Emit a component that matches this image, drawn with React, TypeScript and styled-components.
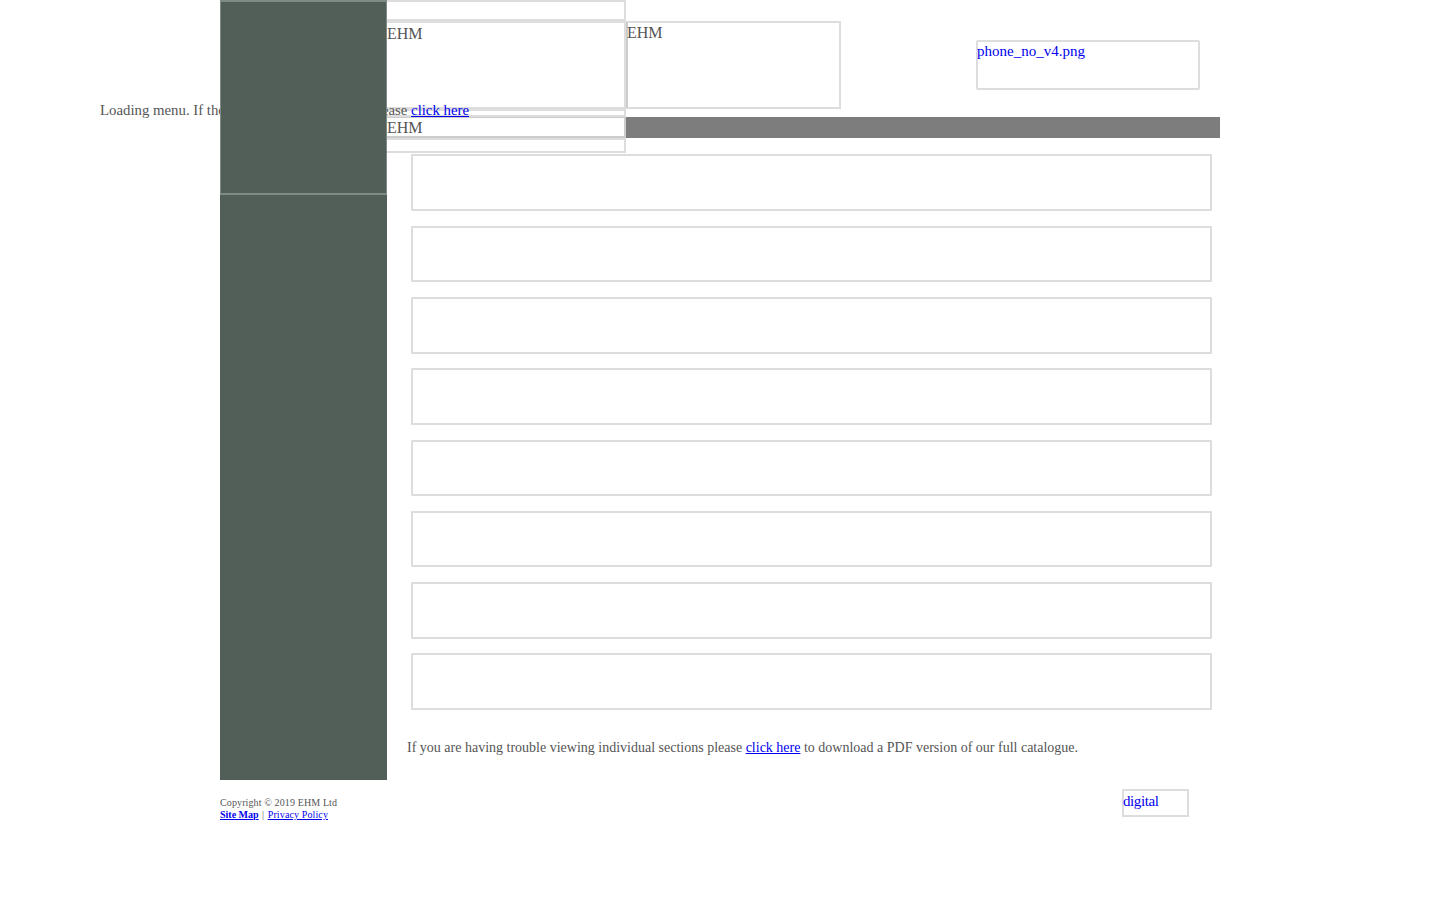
import styled, { createGlobalStyle } from 'styled-components';

const GlobalStyle = createGlobalStyle`
  html, body {
    margin: 0;
    padding: 0;
    background: #fff;
    color: #555;
    font-family: "Liberation Serif", "Times New Roman", serif;
    font-size: 16px;
  }
  a {
    color: #0000ee;
  }
`;

const rows = [0, 1, 2, 3, 4, 5, 6, 7];

const App = () => {
  return (
    <Page>
      <GlobalStyle />
      <LoadingNote>
        Loading menu. If the <Covered>menu does not appear, </Covered>please{' '}
        <a href="#">click here</a>
      </LoadingNote>
      <Sidebar>
        <SideLogo />
      </Sidebar>
      <Main>
        <Header>
          <LogoStack>
            <Slot $height={21} />
            <Slot $height={88}>EHM</Slot>
            <Slot $height={8} />
            <NavSlot>EHM</NavSlot>
            <Slot $height={15} />
          </LogoStack>
          <HeaderRight>
            <TopRow>
              <Banner>EHM</Banner>
              <PhoneBox>phone_no_v4.png</PhoneBox>
            </TopRow>
            <GreyBar />
          </HeaderRight>
        </Header>
        <Sections>
          {rows.map((row) => (
            <Section key={row} />
          ))}
        </Sections>
        <Catalogue>
          If you are having trouble viewing individual sections please <a href="#">click here</a> to
          download a PDF version of our full catalogue.
        </Catalogue>
      </Main>
      <Footer>
        <Legal>
          Copyright © 2019 EHM Ltd
          <br />
          <a href="#">
            <SiteMap>Site Map</SiteMap>
          </a>
          <Divider>|</Divider>
          <a href="#">Privacy Policy</a>
        </Legal>
        <DigitalBox>digital</DigitalBox>
      </Footer>
    </Page>
  );
};

const Page = styled.div`
  position: relative;
  width: 1000px;
  height: 900px;
  margin: 0 auto;
  display: grid;
  grid-template-columns: 167px 833px;
  grid-template-rows: 780px auto;
`;

const LoadingNote = styled.div`
  position: absolute;
  z-index: 1;
  left: -120px;
  top: 101px;
  font-size: 14.8px;
  line-height: 18px;
  white-space: nowrap;
`;

const Covered = styled.span`
  letter-spacing: 0.25px;
`;

const Sidebar = styled.aside`
  position: relative;
  z-index: 2;
  background: #515f58;
`;

const SideLogo = styled.div`
  box-sizing: border-box;
  height: 195px;
  border: 1px solid #7f8c85;
  border-width: 2px 1px;
`;

const Main = styled.main`
  display: flex;
  flex-direction: column;
  min-width: 0;
`;

const Header = styled.header`
  display: grid;
  grid-template-columns: 239px 594px;
  height: 154.4px;
`;

const LogoStack = styled.div`
  display: flex;
  flex-direction: column;
  height: 153px;
  line-height: 22px;
`;

const Slot = styled.div<{ $height: number }>`
  box-sizing: border-box;
  height: ${({ $height }) => $height}px;
  border: 2px solid #ddd;
  border-left-width: 0;
  overflow: hidden;
`;

const NavSlot = styled.div`
  box-sizing: border-box;
  height: 21px;
  border: 2px solid #ccc;
  border-width: 1px 2px 2px 0;
  line-height: 20px;
  overflow: hidden;
`;

const HeaderRight = styled.div`
  display: flex;
  flex-direction: column;
  padding-top: 21px;
`;

const TopRow = styled.div`
  display: flex;
  align-items: flex-start;
  height: 96px;
`;

const Banner = styled.div`
  box-sizing: border-box;
  width: 215px;
  height: 88px;
  border: 2px solid #ddd;
  border-left-color: #ccc;
  line-height: 20px;
  text-indent: -1px;
`;

const PhoneBox = styled.a`
  box-sizing: border-box;
  width: 224px;
  height: 50px;
  margin: 19px 0 0 135px;
  border: 2px solid #ddd;
  border-radius: 2px;
  color: #0000ee;
  font-size: 15px;
  line-height: 18px;
  text-indent: -1px;
`;

const GreyBar = styled.div`
  height: 21px;
  background: #7d7d7d;
`;

const Sections = styled.section`
  display: flex;
  flex-direction: column;
  gap: 14.7px;
  width: 801px;
  margin-left: 24px;
`;

const Section = styled.div`
  box-sizing: border-box;
  height: 56.6px;
  border: 2px solid #ddd;
  border-radius: 1px;
`;

const Catalogue = styled.p`
  margin: 29px 0 0 20px;
  font-size: 14px;
  line-height: 18px;
  white-space: nowrap;
`;

const Footer = styled.footer`
  grid-column: 1 / -1;
  display: flex;
  justify-content: space-between;
  align-items: flex-start;
  padding: 9px 31px 0 0;
`;

const Legal = styled.div`
  padding-top: 8px;
  font-size: 10px;
  line-height: 12px;
  letter-spacing: 0.12px;
`;

const SiteMap = styled.b`
  letter-spacing: 0;
`;

const Divider = styled.span`
  margin: 0 3.5px;
`;

const DigitalBox = styled.a`
  box-sizing: border-box;
  width: 67px;
  height: 28px;
  border: 2px solid #ddd;
  color: #0000ee;
  font-size: 15px;
  line-height: 20px;
  letter-spacing: -0.4px;
  text-indent: -1px;
`;

export default App;
